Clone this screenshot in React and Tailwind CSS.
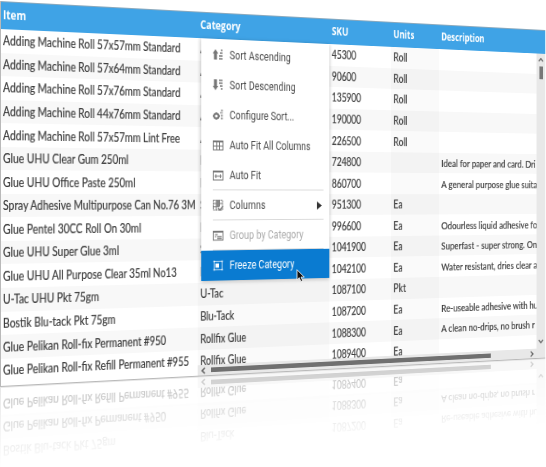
import React from "react";

const rows = [
  ["Adding Machine Roll 57x57mm Standard", "Adding", "45300", "Roll", ""],
  ["Adding Machine Roll 57x64mm Standard", "Adding", "90600", "Roll", ""],
  ["Adding Machine Roll 57x76mm Standard", "Adding", "135900", "Roll", ""],
  ["Adding Machine Roll 44x76mm Standard", "Adding", "190000", "Roll", ""],
  ["Adding Machine Roll 57x57mm Lint Free", "Adding", "226500", "Roll", ""],
  ["Glue UHU Clear Gum 250ml", "Liquid", "724800", "", "Ideal for paper and card. Dri"],
  ["Glue UHU Office Paste 250ml", "Liquid", "860700", "", "A general purpose glue suita"],
  ["Spray Adhesive Multipurpose Can No.76 3M", "Spray", "951300", "Ea", ""],
  ["Glue Pentel 30CC Roll On 30ml", "Liquid", "996600", "Ea", "Odourless liquid adhesive fo"],
  ["Glue UHU Super Glue 3ml", "Super", "1041900", "Ea", "Superfast - super strong. On"],
  ["Glue UHU All Purpose Clear 35ml No13", "Liquid", "1042100", "Ea", "Water resistant, dries clear a"],
  ["U-Tac UHU Pkt 75gm", "U-Tac", "1087100", "Pkt", ""],
  ["Bostik Blu-tack Pkt 75gm", "Blu-Tack", "1087200", "Ea", "Re-useable adhesive with hu"],
  ["Glue Pelikan Roll-fix Permanent #950", "Rollfix Glue", "1088300", "Ea", "A clean no-drips, no brush r"],
  ["Glue Pelikan Roll-fix Refill Permanent #955", "Rollfix Glue", "1089400", "Ea", ""],
];

const GRID = "grid grid-cols-[208px_153px_76px_61px_1fr]";

function Cell({ children, className = "", scale = "scale-x-[0.86]" }) {
  return (
    <div className={`flex min-w-0 items-center whitespace-nowrap pl-[3px] ${className}`}>
      <span className={`block origin-left ${scale}`}>{children}</span>
    </div>
  );
}

function SortIcon({ down }) {
  return (
    <svg viewBox="0 0 12 12" className="h-3 w-3" fill="#777">
      {down ? <path d="M1.3 0h3.4v7H6.2L3 11.5-.2 7h1.5z" /> : <path d="M3 0l3.2 4.5H4.7V11H1.3V4.5H-.2z" />}
      {down ? (
        <path d="M7 0h4v2H7zM7 3h4v2H7zM8 6h3v2H8zM9 9h2v2H9z" opacity=".75" />
      ) : (
        <path d="M9 0h2v2H9zM8 3h3v2H8zM7 6h4v2H7zM7 9h4v2H7z" opacity=".75" />
      )}
    </svg>
  );
}

function ConfigIcon() {
  return (
    <svg viewBox="0 0 12 12" className="h-3 w-3" fill="#777">
      <circle cx="4" cy="7" r="2.6" fill="none" stroke="#777" strokeWidth="2" />
      <path d="M3.3 3h1.4v1.5H3.3zM3.3 9.5h1.4V11H3.3zM0 6.3h1.5v1.4H0zM6.5 6.3H8v1.4H6.5z" />
      <path d="M9.3 0h2v2h-2zM8 2.7h3.3v1.6H8zM9 5.5h2.3v2H9zM9 8.5h2.3v2H9z" opacity=".7" />
    </svg>
  );
}

function TableIcon({ kind }) {
  return (
    <svg viewBox="0 0 12 12" className="h-3 w-3" fill="none" stroke="#777">
      <rect x=".5" y="1.5" width="11" height="9.5" />
      <path d="M0 2h12" strokeWidth="2" />
      {kind === "all" && <path d="M4.5 3v8M7.5 3v8M1 7h10" />}
      {kind === "fit" && <path d="M2 7h8M3.5 5v4M8.5 5v4" />}
      {kind === "group" && <path d="M2.5 5.2h3M5 7.4h5M5 9.4h5M2.5 7.4h1.5" strokeWidth="1.2" />}
    </svg>
  );
}

function ColumnsIcon() {
  return (
    <svg viewBox="0 0 12 12" className="h-3 w-3" fill="none" stroke="#777">
      <rect x=".5" y=".5" width="10.5" height="10.5" strokeDasharray="2 .7" />
      <path d="M4 0v11M7.5 0v7M0 4h11M0 7.5h5" />
      <path d="M4 0h3.5v8H4z" fill="#888" stroke="none" />
      <path d="M6 9l2 2 3.5-4" strokeWidth="1.4" />
    </svg>
  );
}

function FreezeIcon() {
  return (
    <svg viewBox="0 0 12 12" className="h-3 w-3" fill="none" stroke="#fff">
      <rect x="1.5" y="1.5" width="9" height="9" strokeWidth=".7" />
      <path d="M3 3.7h4v4.6H3z" fill="#fff" stroke="none" />
      <path d="M.7.7h1.6v1.6H.7zM9.7.7h1.6v1.6H9.7zM.7 9.7h1.6v1.6H.7zM9.7 9.7h1.6v1.6H9.7z" fill="#fff" stroke="none" />
    </svg>
  );
}

function MenuItem({ icon, children, className = "text-[#4a4a4a]", rule, arrow }) {
  return (
    <div className={`relative flex h-8 items-center pl-[13px] pr-[9px] ${className}`}>
      <span className="w-[18.5px] shrink-0">{icon}</span>
      <span className="grow origin-left scale-x-[0.87] whitespace-nowrap">{children}</span>
      {arrow && (
        <svg viewBox="0 0 6 9" className="h-[9px] w-[6px] shrink-0" fill="#333">
          <path d="M0 0l6 4.5L0 9z" />
        </svg>
      )}
      {rule && <span className="absolute bottom-0 left-[13px] right-[7px] h-px bg-[#d9d9d9]" />}
    </div>
  );
}

function Menu() {
  return (
    <div className="absolute left-[212px] top-[28px] w-[149px] bg-white pt-[1px] font-['Roboto',sans-serif] text-[12px] shadow-[0_1px_4px_rgba(0,0,0,0.28)]">
      <MenuItem icon={<SortIcon />}>Sort Ascending</MenuItem>
      <MenuItem icon={<SortIcon down />}>Sort Descending</MenuItem>
      <MenuItem icon={<ConfigIcon />}>Configure Sort...</MenuItem>
      <MenuItem icon={<TableIcon kind="all" />}>Auto Fit All Columns</MenuItem>
      <MenuItem icon={<TableIcon kind="fit" />} rule>Auto Fit</MenuItem>
      <MenuItem icon={<ColumnsIcon />} rule arrow>Columns</MenuItem>
      <MenuItem icon={<TableIcon kind="group" />} rule className="text-[#aaa]">Group by Category</MenuItem>
      <MenuItem icon={<FreezeIcon />} className="bg-[#0a7bd1] text-white">Freeze Category</MenuItem>
    </div>
  );
}

function Chevron({ d }) {
  return (
    <svg viewBox="0 0 8 8" className="h-2 w-2" fill="none" stroke="#666" strokeWidth="1.6">
      <path d={d} />
    </svg>
  );
}

export default function App() {
  return (
    <div className="relative h-[467px] w-[546px] overflow-hidden bg-white">
      <div className="relative h-[386px] w-[641px] origin-top-left overflow-hidden border-b border-l border-[#b9b9b9] bg-white font-['Lato','Open_Sans',sans-serif] text-[12.5px] text-[#3c3c3c] [-webkit-box-reflect:below_0px_linear-gradient(transparent_79%,rgba(0,0,0,0.34))] [transform:matrix3d(1,0.0536,0,0.000274,0,1,0,0,0,0,1,0,0,1,0,1)]">
        <div className={`${GRID} h-[28px] border-t border-[#8ba9bd] bg-[#3fa3e6] pb-px font-['Open_Sans',sans-serif] text-[12px] font-bold text-white`}>
          <Cell scale="scale-x-[0.83]" className="-ml-px">Item</Cell>
          <Cell scale="scale-x-[0.85]">Category</Cell>
          <Cell scale="scale-x-[0.85]">SKU</Cell>
          <Cell scale="scale-x-[0.83]">Units</Cell>
          <Cell scale="scale-x-[0.82]">Description</Cell>
        </div>
        <div className="flex h-[357px]">
          <div className="w-[628px] shrink-0 overflow-hidden [-webkit-text-stroke:0.2px_#3c3c3c]">
            {rows.map((r, i) => (
              <div key={i} className={`${GRID} h-[23.55px] ${i % 2 ? "bg-[#f8f8f8]" : "bg-white"}`}>
                <Cell scale="scale-x-[0.835]" className="-ml-px pt-[2px]">{r[0]}</Cell>
                <Cell scale="scale-x-[0.83]" className="bg-black/[0.02] pt-[2px]">{r[1]}</Cell>
                <Cell scale="scale-x-[0.82]" className="pt-[2px]">{r[2]}</Cell>
                <Cell scale="scale-x-[0.86]" className="bg-black/[0.02] pt-[2px]">{r[3]}</Cell>
                <Cell scale="scale-x-[0.86]" className="pt-[1px] text-[12px]">{r[4]}</Cell>
              </div>
            ))}
          </div>
          <div className="flex grow flex-col items-center bg-[#e8e8e8] pt-[3px]">
            <Chevron d="M1 6l3-3 3 3" />
            <div className="mt-[4px] h-[15px] w-[5px] bg-[#777]" />
            <div className="mt-auto mb-[15px] h-2"><Chevron d="M1 2l3 3 3-3" /></div>
          </div>
        </div>
        <div className="absolute bottom-0 left-[208px] right-[12px] flex h-[11px] items-center bg-[#e8e8e8] px-[2px]">
          <Chevron d="M6 1L3 4l3 3" />
          <div className="ml-[5px] h-[5px] w-[343px] bg-[#707070]" />
          <div className="ml-auto"><Chevron d="M2 1l3 3-3 3" /></div>
        </div>
        <Menu />
      </div>
      <svg viewBox="0 0 10 14" className="absolute left-[296px] top-[269px] h-[14px] w-[10px]">
        <path d="M1 .7v10l2.3-2 1.5 3.8 1.9-.8-1.6-3.6h3.2z" fill="#111" stroke="#fff" strokeWidth=".8" />
      </svg>
    </div>
  );
}
